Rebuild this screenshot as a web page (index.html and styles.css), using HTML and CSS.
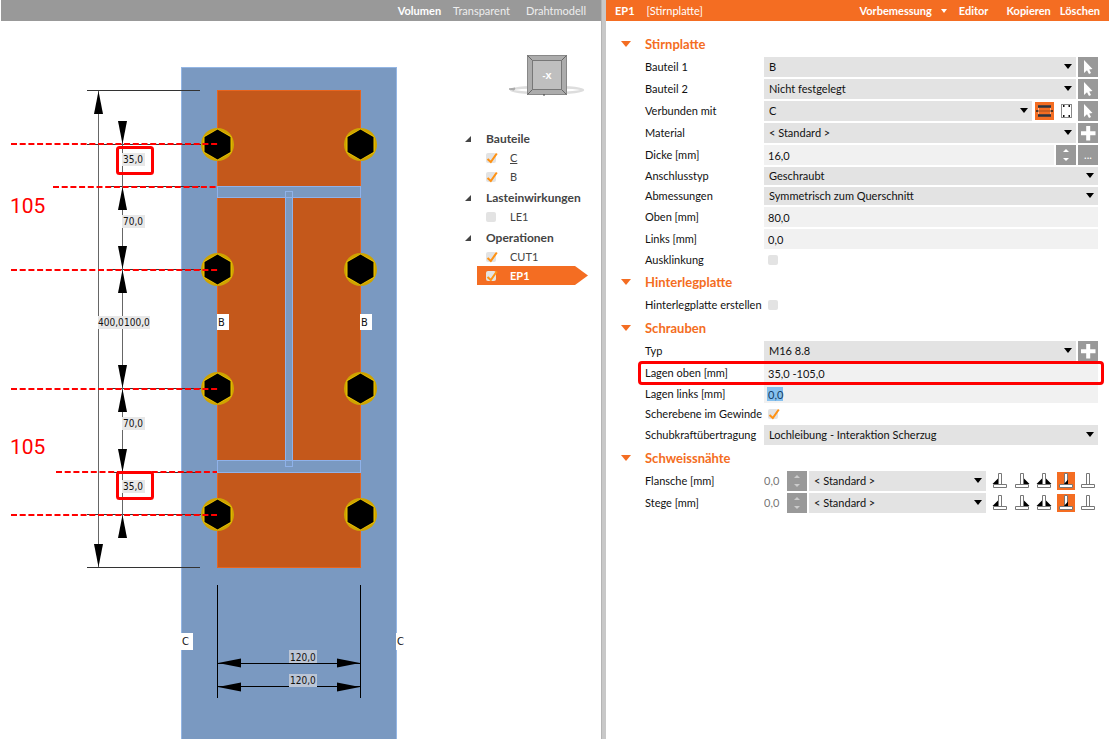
FILE: index.html
```html
<!DOCTYPE html>
<html lang="de">
<head>
<meta charset="utf-8">
<title>EP1 – Stirnplatte</title>
<meta name="viewport" content="width=device-width, initial-scale=1">
<link rel="stylesheet" href="styles.css">
</head>
<body>
<svg class="defs" width="0" height="0" aria-hidden="true">
  <defs>
    <symbol id="tick" viewBox="0 0 12 12"><path d="M1.5 7 L4.8 10 L10.8 1.5" fill="none" stroke="#ff9214" stroke-width="2.1"/></symbol>
    <symbol id="cursor" viewBox="0 0 20 20"><path d="M6 3 V16 L9 13.3 L11 17 L13 16 L11.200 12.400 L14.500 12 Z" fill="#fff"/></symbol>
    <symbol id="plus" viewBox="0 0 20 20"><path d="M8.200 3 H12.200 V8.200 H17.500 V12.200 H12.200 V17.500 H8.200 V12.200 H3 V8.200 H8.200 Z" fill="#fff"/></symbol>
    <symbol id="tee" viewBox="0 0 20 20"><path d="M8.500 13.500 V2.500 H11.500 V13.500 M3.500 13.500 H16.500 V16.500 H3.500 Z" fill="#fff" stroke="#777" stroke-width="1"/></symbol>
    <symbol id="weld-l" viewBox="0 0 20 20"><use href="#tee"/><path d="M8 7.500 V13 H2.500 Z"/></symbol>
    <symbol id="weld-r" viewBox="0 0 20 20"><use href="#tee"/><path d="M12 7.500 V13 H17.500 Z"/></symbol>
    <symbol id="weld-lr" viewBox="0 0 20 20"><use href="#tee"/><path d="M8 7.500 V13 H2.500 Z M12 7.500 V13 H17.500 Z"/></symbol>
    <symbol id="weld-full" viewBox="0 0 20 20"><rect x="1" y="1" width="18" height="18" fill="#f46d22"/><use href="#tee"/><path d="M12 8.500 V13 H8 Z"/></symbol>
    <g id="bolt"><circle r="16.500" fill="#cfa400"/><path d="M0 -15.500 L14 -8 V8 L0 15.500 L-14 8 V-8 Z" fill="#f3c800"/><path d="M0 -15 L13 -7.500 V7.500 L0 15 L-13 7.500 V-7.500 Z"/></g>
    <path id="head" d="M0 0 L4.500 23 H-4.500 Z"/>
  </defs>
</svg>

<main class="app">
  <section class="view">
    <nav class="bar bar-view">
      <button type="button" class="bar-btn strong">Volumen</button>
      <button type="button" class="bar-btn">Transparent</button>
      <button type="button" class="bar-btn last">Drahtmodell</button>
    </nav>
    <div class="scene">
      <svg class="drawing" width="459" height="718" viewBox="1 21 459 718" role="img" aria-label="Stirnplatte mit Schrauben und Bemassung">
        <rect x="181.500" y="67.500" width="215" height="680" fill="#7a99c1" stroke="#94b6e4"/>
        <rect x="217.500" y="90.500" width="143" height="477" fill="#c4581b" stroke="#e8641e"/>
        <g fill="#7a99c1" stroke="#8fb2ea">
          <rect x="217.500" y="186.500" width="143" height="11"/>
          <rect x="217.500" y="460.500" width="143" height="12"/>
          <rect x="285.500" y="191.500" width="7" height="275"/>
          <path d="M285 197.500 H293 M285 460.500 H293" fill="none"/>
        </g>
        <g stroke="#333" stroke-width="1" fill="none">
          <path d="M87 90.500 H200 M87 144.500 H217 M111 186.500 H200 M111 269.500 H217 M111 388.500 H217 M111 472.500 H200 M87 514.500 H217 M87 567.500 H200"/>
          <path d="M98.500 91 V567 M122.500 122 V536" stroke="#666"/>
        </g>
        <path d="M217.500 585 V698 M360.500 585 V698 M218 663.500 H360 M218 686.500 H360" stroke="#000"/>
        <use href="#head" transform="translate(98.500 91)"/>
        <use href="#head" transform="translate(98.500 567) rotate(180)"/>
        <use href="#head" transform="translate(122.500 144) rotate(180)"/>
        <use href="#head" transform="translate(122.500 187)"/>
        <use href="#head" transform="translate(122.500 269) rotate(180)"/>
        <use href="#head" transform="translate(122.500 270)"/>
        <use href="#head" transform="translate(122.500 388) rotate(180)"/>
        <use href="#head" transform="translate(122.500 389)"/>
        <use href="#head" transform="translate(122.500 472) rotate(180)"/>
        <use href="#head" transform="translate(122.500 515)"/>
        <use href="#head" transform="translate(218 663) rotate(-90)"/>
        <use href="#head" transform="translate(360 663) rotate(90)"/>
        <use href="#head" transform="translate(218 687) rotate(-90)"/>
        <use href="#head" transform="translate(360 687) rotate(90)"/>
        <use href="#bolt" x="217.500" y="144.500"/><use href="#bolt" x="360.500" y="144.500"/>
        <use href="#bolt" x="217.500" y="269.500"/><use href="#bolt" x="360.500" y="269.500"/>
        <use href="#bolt" x="217.500" y="388.500"/><use href="#bolt" x="360.500" y="388.500"/>
        <use href="#bolt" x="217.500" y="514.500"/><use href="#bolt" x="360.500" y="514.500"/>
        <g fill="#e8e8e8">
          <rect x="122" y="153" width="23" height="13"/><rect x="122" y="215" width="23" height="13"/>
          <rect x="98" y="316" width="52" height="13"/>
          <rect x="122" y="417" width="23" height="13"/><rect x="122" y="480" width="23" height="13"/>
        </g>
        <g fill="#bcc6d6"><rect x="289" y="650" width="28" height="13"/><rect x="289" y="674" width="28" height="13"/></g>
        <g fill="#fff">
          <rect x="217" y="314" width="12" height="16"/><rect x="360" y="314" width="12" height="16"/>
          <rect x="181" y="633" width="12" height="17"/><rect x="396" y="633" width="12" height="17"/>
        </g>
        <g class="dims">
          <text x="123" y="163">35,0</text><text x="123" y="225">70,0</text>
          <text x="124" y="326">100,0</text><text x="98" y="326">400,0</text>
          <text x="123" y="427">70,0</text><text x="123" y="490">35,0</text>
          <text x="290" y="661">120,0</text><text x="290" y="684">120,0</text>
        </g>
        <g class="tags">
          <text x="218" y="326">B</text><text x="361" y="326">B</text>
          <text x="182" y="645">C</text><text x="397" y="645">C</text>
        </g>
        <g fill="none" stroke="#f00" stroke-width="2" stroke-dasharray="6 2.700">
          <path d="M11 144 H219 M11 270 H218 M11 389 H218 M11 515 H217"/>
          <path d="M53 187 H217 M56 472 H217"/>
        </g>
        <g fill="none" stroke="#f00" stroke-width="3">
          <rect x="117.500" y="147.500" width="35" height="26" rx="2"/>
          <rect x="117.500" y="472.500" width="35" height="26" rx="2"/>
        </g>
        <g class="notes"><text x="10" y="213">105</text><text x="10" y="454">105</text></g>
      </svg>

      <aside class="side">
        <svg class="cube" width="80" height="44" viewBox="507 54 80 44" role="img" aria-label="Ansicht -X">
          <ellipse cx="547" cy="90" rx="36" ry="3" fill="none" stroke="#ddd" stroke-width="2.500"/>
          <path d="M509 89 L515 88 L514 90 Z" fill="#aaa" stroke="#aaa"/>
          <rect x="527.500" y="55.500" width="39" height="39" fill="#acacac" stroke="#888"/>
          <path d="M527.500 55.500 L532.500 60.500 M566.500 55.500 L561.500 60.500 M527.500 94.500 L532.500 89.500 M566.500 94.500 L561.500 89.500" stroke="#666"/>
          <rect x="532.500" y="60.500" width="29" height="29" fill="#bfbfbf" stroke="#777"/>
          <path d="M543 95 h2" stroke="#444"/>
          <text class="cube-text" x="547" y="79" text-anchor="middle">-X</text>
        </svg>
        <div class="tree">
          <div class="group">
            <h2 class="group-title">Bauteile</h2>
            <label class="item"><span class="check"><input type="checkbox" checked><svg><use href="#tick"/></svg></span><span class="underlined">C</span></label>
            <label class="item"><span class="check"><input type="checkbox" checked><svg><use href="#tick"/></svg></span><span>B</span></label>
          </div>
          <div class="group">
            <h2 class="group-title">Lasteinwirkungen</h2>
            <label class="item"><span class="check"><input type="checkbox"><svg><use href="#tick"/></svg></span><span>LE1</span></label>
          </div>
          <div class="group">
            <h2 class="group-title">Operationen</h2>
            <label class="item"><span class="check"><input type="checkbox" checked><svg><use href="#tick"/></svg></span><span>CUT1</span></label>
            <label class="item selected"><span class="check"><input type="checkbox" checked><svg><use href="#tick"/></svg></span><span>EP1</span></label>
          </div>
        </div>
      </aside>
    </div>
  </section>

  <div class="divider"></div>

  <section class="props">
    <header class="bar bar-props">
      <b>EP1</b><span class="kind">[Stirnplatte]</span>
      <button type="button" class="bar-btn strong menu">Vorbemessung</button>
      <button type="button" class="bar-btn strong">Editor</button>
      <span class="pair">
        <button type="button" class="bar-btn strong">Kopieren</button>
        <button type="button" class="bar-btn strong">Löschen</button>
      </span>
    </header>

    <form class="form">
      <h2 class="section">Stirnplatte</h2>
      <div class="row"><label for="b1">Bauteil 1</label><div class="ctl"><span class="sel"><select id="b1"><option>B</option></select></span><button type="button" class="sq" aria-label="Bauteil 1 auswählen"><svg><use href="#cursor"/></svg></button></div></div>
      <div class="row"><label for="b2">Bauteil 2</label><div class="ctl"><span class="sel"><select id="b2"><option>Nicht festgelegt</option></select></span><button type="button" class="sq" aria-label="Bauteil 2 auswählen"><svg><use href="#cursor"/></svg></button></div></div>
      <div class="row"><label for="vm">Verbunden mit</label><div class="ctl"><span class="sel"><select id="vm"><option>C</option></select></span>
        <button type="button" class="sq plain" aria-label="Flansch"><svg viewBox="0 0 20 20"><rect x="1" y="1" width="19" height="18" fill="#f46d22"/><path d="M4 5.500 H17 M4 14.500 H17" stroke="#2b3440" stroke-width="2.500"/><path d="M4.500 7 V13 M16.500 7 V13" stroke="#ffb48a"/><path d="M2 10 H4.500 M16.500 10 H19" stroke="#222" stroke-width="1.500"/><path d="M5 10 H16" stroke="#a8501c"/></svg></button>
        <button type="button" class="sq plain" aria-label="Querschnitt"><svg viewBox="0 0 20 20"><rect x="5.500" y="3.500" width="10" height="13" fill="#fff" stroke="#888"/><path d="M7 5 h1.500 M12.500 5 h1.500 M7 15 h1.500 M12.500 15 h1.500" stroke="#111" stroke-width="2"/></svg></button>
        <button type="button" class="sq" aria-label="Verbundenes Bauteil auswählen"><svg><use href="#cursor"/></svg></button></div></div>
      <div class="row"><label for="mat">Material</label><div class="ctl"><span class="sel"><select id="mat"><option>&lt; Standard &gt;</option></select></span><button type="button" class="sq" aria-label="Material hinzufügen"><svg><use href="#plus"/></svg></button></div></div>
      <div class="row"><label for="dicke">Dicke [mm]</label><div class="ctl"><input class="txt" id="dicke" type="text" value="16,0"><button type="button" class="sq spin" aria-label="Dicke ändern"></button><button type="button" class="sq" aria-label="Dicke bearbeiten">...</button></div></div>
      <div class="row low"><label for="typ">Anschlusstyp</label><div class="ctl"><span class="sel"><select id="typ"><option>Geschraubt</option></select></span></div></div>
      <div class="row low"><label for="abm">Abmessungen</label><div class="ctl"><span class="sel"><select id="abm"><option>Symmetrisch zum Querschnitt</option></select></span></div></div>
      <div class="row"><label for="oben">Oben [mm]</label><div class="ctl"><input class="txt" id="oben" type="text" value="80,0"></div></div>
      <div class="row"><label for="links">Links [mm]</label><div class="ctl"><input class="txt" id="links" type="text" value="0,0"></div></div>
      <div class="row low"><label for="ausk">Ausklinkung</label><div class="ctl"><span class="check"><input id="ausk" type="checkbox"><svg><use href="#tick"/></svg></span></div></div>

      <h2 class="section">Hinterlegplatte</h2>
      <div class="row"><label for="hint">Hinterlegplatte erstellen</label><div class="ctl"><span class="check"><input id="hint" type="checkbox"><svg><use href="#tick"/></svg></span></div></div>

      <h2 class="section">Schrauben</h2>
      <div class="row"><label for="styp">Typ</label><div class="ctl"><span class="sel"><select id="styp"><option>M16 8.8</option></select></span><button type="button" class="sq" aria-label="Schraube hinzufügen"><svg><use href="#plus"/></svg></button></div></div>
      <div class="row marked"><label for="lo">Lagen oben [mm]</label><div class="ctl"><input class="txt" id="lo" type="text" value="35,0 -105,0"></div></div>
      <div class="row low"><label for="ll">Lagen links [mm]</label><div class="ctl"><input class="txt picked" id="ll" type="text" value="0,0"></div></div>
      <div class="row low"><label for="sg">Scherebene im Gewinde</label><div class="ctl"><span class="check"><input id="sg" type="checkbox" checked><svg><use href="#tick"/></svg></span></div></div>
      <div class="row"><label for="sk">Schubkraftübertragung</label><div class="ctl"><span class="sel"><select id="sk"><option>Lochleibung - Interaktion Scherzug</option></select></span></div></div>

      <h2 class="section">Schweissnähte</h2>
      <div class="row"><label for="fl">Flansche [mm]</label><div class="ctl"><input class="num" id="fl" type="text" value="0,0" disabled><button type="button" class="sq spin" disabled aria-label="Flansche ändern"></button><span class="sel"><select aria-label="Flansche Material"><option>&lt; Standard &gt;</option></select></span>
        <div class="welds"><button type="button" class="sq plain" aria-label="Kehlnaht links"><svg><use href="#weld-l"/></svg></button><button type="button" class="sq plain" aria-label="Kehlnaht rechts"><svg><use href="#weld-r"/></svg></button><button type="button" class="sq plain" aria-label="Kehlnaht beidseitig"><svg><use href="#weld-lr"/></svg></button><button type="button" class="sq plain" aria-label="Stumpfnaht"><svg><use href="#weld-full"/></svg></button><button type="button" class="sq plain" aria-label="Keine Naht"><svg><use href="#tee"/></svg></button></div></div></div>
      <div class="row"><label for="st">Stege [mm]</label><div class="ctl"><input class="num" id="st" type="text" value="0,0" disabled><button type="button" class="sq spin" disabled aria-label="Stege ändern"></button><span class="sel"><select aria-label="Stege Material"><option>&lt; Standard &gt;</option></select></span>
        <div class="welds"><button type="button" class="sq plain" aria-label="Kehlnaht links"><svg><use href="#weld-l"/></svg></button><button type="button" class="sq plain" aria-label="Kehlnaht rechts"><svg><use href="#weld-r"/></svg></button><button type="button" class="sq plain" aria-label="Kehlnaht beidseitig"><svg><use href="#weld-lr"/></svg></button><button type="button" class="sq plain" aria-label="Stumpfnaht"><svg><use href="#weld-full"/></svg></button><button type="button" class="sq plain" aria-label="Keine Naht"><svg><use href="#tee"/></svg></button></div></div></div>
    </form>
  </section>
</main>
</body>
</html>
```
FILE: styles.css
```css
* { box-sizing: border-box; }

body {
  margin: 0;
  background: #fff;
  color: #111;
  font: 11px/16px Lato, "Open Sans", sans-serif;
}

button, input, select {
  margin: 0;
  padding: 0;
  border: 0;
  border-radius: 0;
  background: none;
  color: inherit;
  font: inherit;
}

.defs { position: absolute; }

.app {
  display: grid;
  grid-template-columns: minmax(600px, 600fr) 5px minmax(460px, 503fr);
  padding-left: 1px;
}

.divider {
  background: #c8c8c8;
  border-left: 1px solid #b4b4b4;
}

/* Title bars */
.bar {
  display: flex;
  align-items: center;
  height: 21px;
  color: #fff;
}
.bar-view {
  justify-content: flex-end;
  gap: 12px;
  padding-right: 15px;
  background: #999;
  color: #eee;
}
.bar-props {
  gap: 12px;
  padding: 0 9px;
  background: #f46d22;
}
.strong { font-weight: 700; color: #fff; }
.last { margin-left: 4px; }
.kind { margin-right: auto; }
.pair { display: flex; gap: 9px; margin-left: 6px; }
.menu { display: flex; align-items: center; gap: 9px; }
.menu::after {
  content: "";
  border: 3px solid transparent;
  border-top: 4px solid #fff;
  border-bottom: 0;
}

/* Model view */
.scene { display: flex; }
.drawing { display: block; flex: none; }
.dims { font: 10px "DejaVu Sans Condensed", "DejaVu Sans", sans-serif; fill: #111; }
.tags { font: 11px "DejaVu Sans Condensed", "DejaVu Sans", sans-serif; fill: #111; }
.notes { font: 21px Roboto, sans-serif; fill: #f00; }
.cube-text { font: 700 9px "Noto Sans", sans-serif; fill: #fff; }

.side { flex: 1; padding-top: 33px; }
.cube { display: block; margin-left: 47px; }
.tree {
  display: grid;
  gap: 2px;
  margin: 31px 13px 0 5px;
  color: #444;
}
.group-title {
  display: flex;
  align-items: center;
  gap: 15px;
  height: 19px;
  margin: 0;
  font-size: 12px;
  white-space: nowrap;
}
.group-title::before {
  content: "";
  border-left: 6px solid transparent;
  border-bottom: 6px solid #444;
}
.item {
  display: flex;
  align-items: center;
  gap: 14px;
  height: 19px;
  margin-left: 12px;
  padding-left: 9px;
}
.underlined { text-decoration: underline; }
.selected {
  background: #f46d22;
  color: #fff;
  font-weight: 700;
  clip-path: polygon(0 0, calc(100% - 13px) 0, 100% 50%, calc(100% - 13px) 100%, 0 100%);
}

.check {
  position: relative;
  display: block;
  width: 10px;
  height: 10px;
}
.check input {
  display: block;
  appearance: none;
  width: 10px;
  height: 10px;
  border-radius: 2px;
  background: #e3e3e3;
}
.check svg {
  position: absolute;
  left: 0;
  top: -1px;
  width: 12px;
  height: 12px;
  display: none;
  pointer-events: none;
}
.check input:checked + svg { display: block; }

/* Property form */
.form {
  display: grid;
  gap: 2px;
  padding: 12px 11px 0 39px;
}
.section {
  display: flex;
  align-items: center;
  gap: 14px;
  height: 22px;
  margin: 0 0 0 -24px;
  color: #f46d22;
  font-size: 13px;
}
.section::before {
  content: "";
  border: 5px solid transparent;
  border-top: 6px solid #f46d22;
  border-bottom: 0;
}
.row {
  position: relative;
  display: grid;
  grid-template-columns: 119px 1fr;
  align-items: center;
  height: 20px;
  white-space: nowrap;
}
.low { height: 18px; }
.ctl {
  display: flex;
  align-items: center;
  gap: 2px;
  height: 100%;
}
.ctl > .check { margin-left: 4px; }

.sel { position: relative; flex: 1; height: 100%; }
.sel select {
  display: block;
  appearance: none;
  width: 100%;
  height: 100%;
  padding-left: 5px;
  background: #e3e3e3;
}
.sel::after {
  content: "";
  position: absolute;
  right: 4px;
  top: calc(50% - 3px);
  border: 4px solid transparent;
  border-top: 5px solid #000;
  border-bottom: 0;
  pointer-events: none;
}
.txt {
  flex: 1;
  min-width: 0;
  height: 100%;
  padding-left: 4px;
  background: #f1f1f1;
}
.picked {
  background: linear-gradient(#86c0ee, #86c0ee) 3px center / 16px 14px no-repeat #f1f1f1;
  color: #123e68;
}
.num { width: 21px; color: #777; }

.sq {
  display: grid;
  place-items: center;
  flex: none;
  width: 20px;
  height: 20px;
  background: #999;
  color: #fff;
}
.plain { background: none; }
.sq svg { display: block; width: 20px; height: 20px; }
.spin { align-content: center; gap: 6px; }
.spin::before, .spin::after { content: ""; border: 3px solid transparent; }
.spin::before { border-top: 0; border-bottom: 3px solid #fff; }
.spin::after { border-bottom: 0; border-top: 3px solid #fff; }
.spin:disabled::before, .spin:disabled::after { opacity: 0.5; }
.welds { display: flex; gap: 2px; margin-left: 2px; }

.marked::after {
  content: "";
  position: absolute;
  inset: -2px -6px -2px -7px;
  border: 3px solid #f00;
  border-radius: 4px;
  pointer-events: none;
}
```
